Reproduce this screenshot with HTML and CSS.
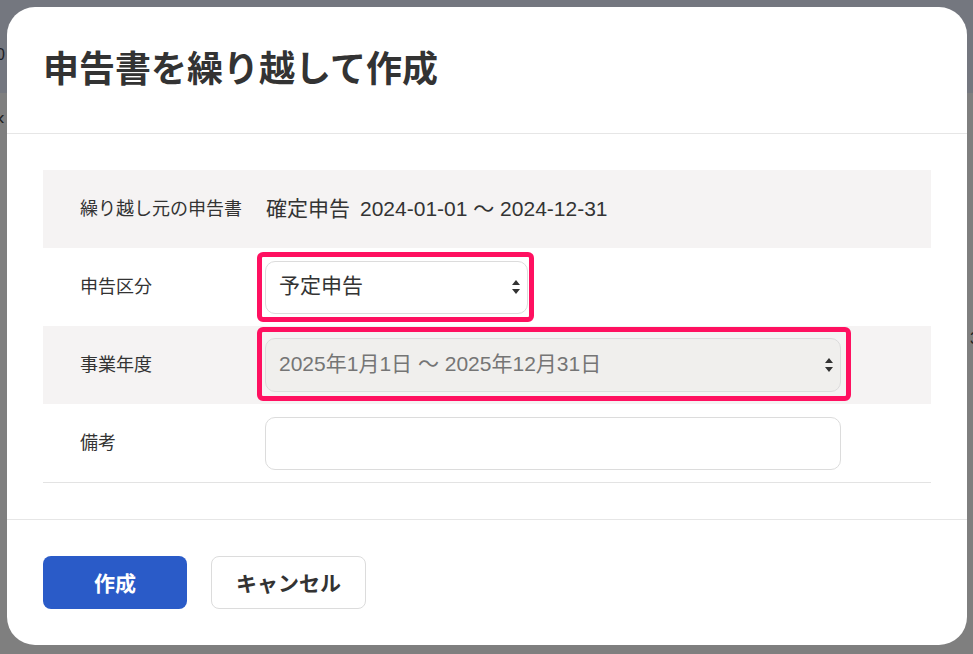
FILE: index.html
```html
<!DOCTYPE html>
<html lang="ja">
<head>
  <meta charset="UTF-8">
  <title>申告書を繰り越して作成</title>
  <link rel="stylesheet" href="styles.css">
</head>
<body>
  <div class="behind">
    <span class="peek peek-zero">0</span>
    <span class="peek peek-back">‹</span>
    <span class="peek peek-bracket">[</span>
    <span class="peek peek-three">3</span>
  </div>

  <div class="overlay">
    <div class="modal">
      <div class="modal-header">
        <h1>申告書を繰り越して作成</h1>
      </div>

      <div class="modal-body">
        <div class="form-row shaded">
          <div class="label">繰り越し元の申告書</div>
          <div class="value">
            <span class="kind">確定申告</span>
            <span class="period">2024-01-01 〜 2024-12-31</span>
          </div>
        </div>
        <div class="form-row">
          <div class="label">申告区分</div>
          <div class="value">
            <div class="select-wrap marked mark-small">
              <select class="select select-short">
                <option>予定申告</option>
              </select>
              <svg class="arrows" width="8" height="14" viewBox="0 0 8 14"><path d="M4 0L8 5H0Z M0 9H8L4 14Z" fill="#333"/></svg>
            </div>
          </div>
        </div>
        <div class="form-row shaded">
          <div class="label">事業年度</div>
          <div class="value">
            <div class="select-wrap marked mark-wide">
              <select class="select select-long" disabled>
                <option>2025年1月1日 〜 2025年12月31日</option>
              </select>
              <svg class="arrows" width="8" height="14" viewBox="0 0 8 14"><path d="M4 0L8 5H0Z M0 9H8L4 14Z" fill="#333"/></svg>
            </div>
          </div>
        </div>
        <div class="form-row last">
          <div class="label">備考</div>
          <div class="value">
            <input class="text-input" type="text">
          </div>
        </div>
      </div>

      <div class="modal-footer">
        <button class="btn btn-primary">作成</button>
        <button class="btn btn-plain">キャンセル</button>
      </div>
    </div>
  </div>
</body>
</html>
```

FILE: styles.css
```css
html, body {
  height: 100%;
}
body {
  margin: 0;
  overflow: hidden;
  position: relative;
  font-family: "Liberation Sans", "Noto Sans CJK JP", sans-serif;
  color: #333;
  background: linear-gradient(#74777f 0, #74777f 93px, #7f7f7f 93px);
}
.behind {
  position: absolute;
  inset: 0;
}
.peek {
  position: absolute;
  font-size: 16px;
  color: #222;
}
.peek-zero {
  left: -4px;
  top: 46px;
  color: #1c1f27;
}
.peek-back {
  left: -2px;
  top: 106px;
  font-size: 20px;
}
.peek-bracket {
  right: -6px;
  top: 130px;
}
.peek-three {
  right: -6px;
  top: 330px;
}

.overlay {
  position: relative;
  padding: 7px;
}
.modal {
  width: 960px;
  height: 638px;
  background: #fff;
  border-radius: 28px;
  display: flex;
  flex-direction: column;
}
.modal-header {
  height: 127px;
  box-sizing: border-box;
  padding: 0 36px 8px;
  border-bottom: 1px solid #e6e6e6;
  display: flex;
  align-items: center;
}
.modal-header h1 {
  margin: 0;
  font-size: 36px;
  font-weight: 700;
  font-family: "Noto Sans CJK JP", sans-serif;
}

.modal-body {
  padding: 36px;
  border-bottom: 1px solid #e6e6e6;
}
.form-row {
  display: flex;
  align-items: center;
  height: 78px;
}
.form-row.shaded {
  background: #f5f3f3;
}
.form-row.last {
  border-bottom: 1px solid #e3e3e3;
}
.label {
  width: 222px;
  box-sizing: border-box;
  padding: 0 0 4px 37px;
  font-size: 18px;
}
.value {
  font-size: 21px;
  display: flex;
  align-items: center;
}
.kind,
.period {
  padding-bottom: 4px;
}
.kind {
  margin: 0 10px 0 1px;
}

.select-wrap {
  position: relative;
}
.select {
  appearance: none;
  -webkit-appearance: none;
  height: 53px;
  box-sizing: border-box;
  border: 1px solid #dcdcdc;
  border-radius: 10px;
  background: #fff;
  padding: 0 30px 3px 13px;
  font: inherit;
  font-size: 21px;
  color: #333;
}
.select-short {
  width: 263px;
}
.select-long {
  width: 576px;
  height: 54px;
  background: #f0efed;
  color: #757575;
  opacity: 1;
}
.arrows {
  position: absolute;
  right: 8px;
  top: 50%;
  margin-top: -7px;
  pointer-events: none;
}
.marked::after {
  content: "";
  position: absolute;
  border: 5px solid #ff1060;
  border-radius: 6px;
}
.mark-small::after {
  left: -8px;
  right: -6px;
  top: -9px;
  bottom: -8px;
}
.mark-wide::after {
  left: -8px;
  right: -10px;
  top: -11px;
  bottom: -9px;
}

.text-input {
  width: 576px;
  height: 53px;
  box-sizing: border-box;
  border: 1px solid #dcdcdc;
  border-radius: 10px;
  font: inherit;
  padding: 0 13px;
}

.modal-footer {
  padding: 36px;
  display: flex;
  gap: 24px;
}
.btn {
  height: 53px;
  border-radius: 8px;
  padding-bottom: 3px;
  font-family: "Noto Sans CJK JP", sans-serif;
  font-size: 21px;
  font-weight: 700;
}
.btn-primary {
  width: 144px;
  background: #2a5bc8;
  border: none;
  color: #fff;
}
.btn-plain {
  width: 155px;
  background: #fff;
  border: 1px solid #dcdcdc;
  color: #333;
}
```
